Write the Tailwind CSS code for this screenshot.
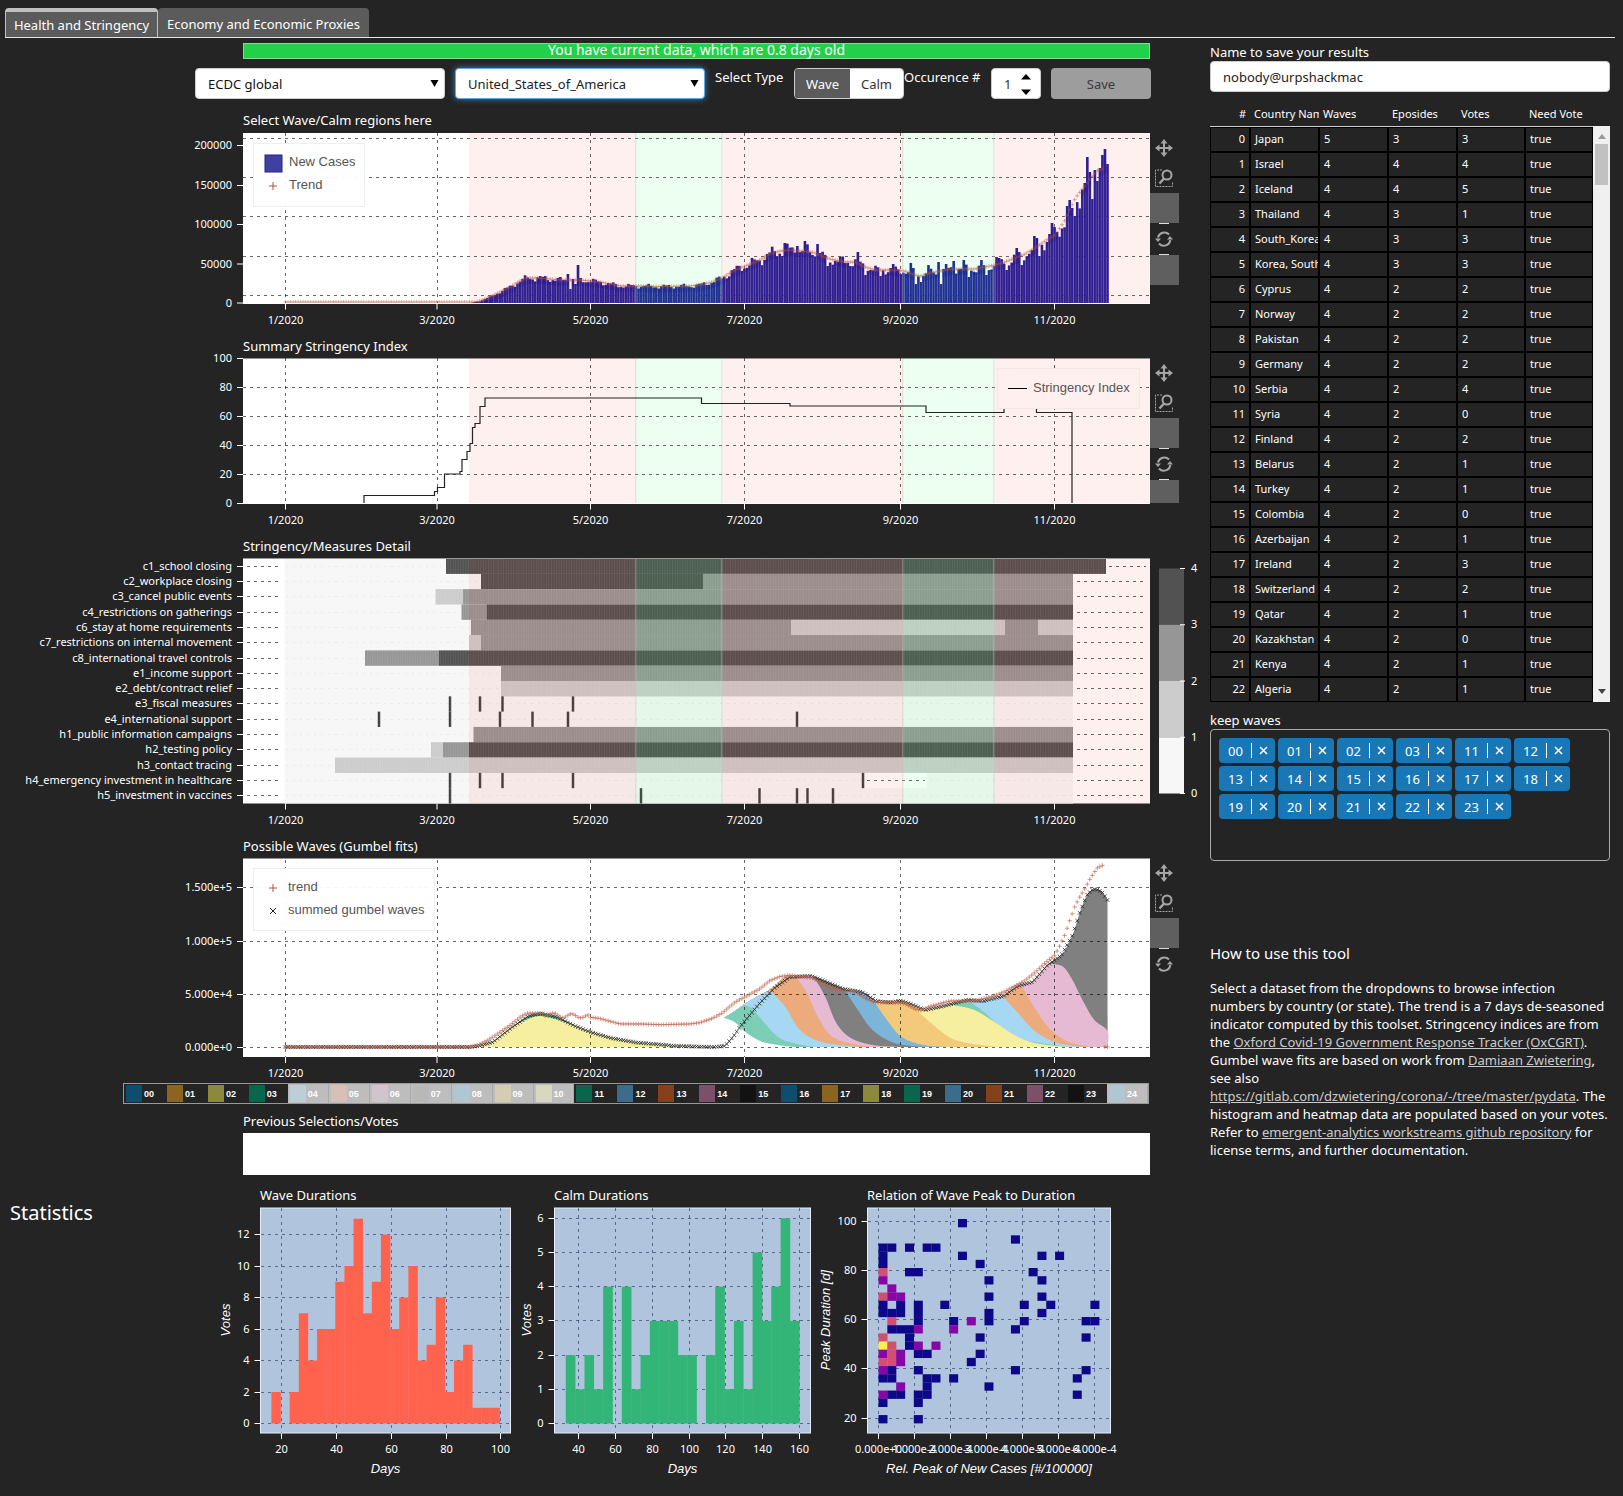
<!DOCTYPE html>
<html lang="en">
<head>
<meta charset="utf-8">
<meta name="viewport" content="width=device-width, initial-scale=1">
<title>Health and Stringency</title>
<script src="https://cdn.jsdelivr.net/npm/@tailwindcss/browser@4"></script>
</head>
<body class="bg-[#242424] text-white font-['Noto_Sans',sans-serif] text-[13px] leading-[18px] min-h-screen">
<nav class="mx-[5px] mr-2 pt-2 flex border-b border-[#e6e6e6]" aria-label="Sections">
  <button class="h-[29px] w-[153px] rounded-t border border-b-0 border-t-4 border-[#c0c0c0] bg-[#5b5b5b] text-center whitespace-nowrap leading-[22px]">Health and Stringency</button>
  <button class="h-[29px] w-[211px] rounded-t bg-[#5b5b5b] text-center whitespace-nowrap pt-[3px]">Economy and Economic Proxies</button>
</nav>

<main class="grid grid-cols-[minmax(0,1fr)_400px] gap-x-[10px] pr-[13px]">
  <div class="pt-[5px]">
    <div class="ml-[243px] mr-[50px] h-4 bg-[#23d04b] border border-[#7fdc93] text-center text-sm leading-3">You have current data, which are 0.8 days old</div>

    <form class="ml-[195px] mr-[49px] mt-[9px] flex h-[31px]" onsubmit="return false">
      <div class="relative w-[250px] mr-[10px]">
        <select aria-label="Dataset" class="appearance-none w-full h-full rounded bg-white text-[#111] border border-[#ccc] px-3 outline-none"><option>ECDC global</option></select>
        <svg class="absolute right-[6px] top-[12px] pointer-events-none" width="9" height="8"><path d="M0.500 0H8.500L4.500 7Z" fill="#000"/></svg>
      </div>
      <div class="relative w-[250px] mr-[10px]">
        <select aria-label="Country" class="appearance-none w-full h-full rounded bg-white text-[#222] border border-[#5fa8e0] px-3 outline-none shadow-[0_0_6px_#3d7fb8]"><option>United_States_of_America</option></select>
        <svg class="absolute right-[6px] top-[12px] pointer-events-none" width="9" height="8"><path d="M0.500 0H8.500L4.500 7Z" fill="#000"/></svg>
      </div>
      <span class="w-[79px]">Select Type</span>
      <div class="flex w-[110px] rounded overflow-hidden border border-[#ccc]" role="group" aria-label="Select Type">
        <button class="flex-1 bg-[#5b5b5b] text-white">Wave</button>
        <button class="w-[53px] bg-white text-[#333]">Calm</button>
      </div>
      <label for="occ" class="w-[87px] whitespace-nowrap">Occurence #</label>
      <div class="relative w-[50px] mr-[10px]">
        <input id="occ" type="number" value="1" class="[appearance:textfield] [&::-webkit-inner-spin-button]:appearance-none w-full h-full rounded bg-white text-[#333] border border-[#ccc] pl-3 pr-5 outline-none">
        <svg class="absolute right-[10px] top-[6px] pointer-events-none" width="10" height="21"><path d="M0 5.500L5 0L10 5.500ZM0 15.500H10L5 21Z" fill="#000"/></svg>
      </div>
      <button class="flex-1 rounded bg-[#9d9d9d] text-[#3a3a3a]">Save</button>
    </form>

    <section class="mt-3">
      <h2 class="ml-[243px] h-5 leading-[19px]">Select Wave/Calm regions here</h2>
      <div class="flex"><svg id="cases" class="flex-1 min-w-0 h-[206px]" role="img" aria-label="New cases"></svg><div data-tools="2" class="w-[50px] pt-[2px]"></div></div>
    </section>
    <section>
      <h2 class="ml-[243px] h-5 leading-[18px]">Summary Stringency Index</h2>
      <div class="flex h-[180px]"><svg id="index" class="flex-1 min-w-0 h-[180px] overflow-visible" role="img" aria-label="Stringency index"></svg><div data-tools="2" class="w-[50px] pt-px h-[146px] overflow-hidden"></div></div>
    </section>
    <section>
      <h2 class="ml-[243px] h-5 leading-[18px]">Stringency/Measures Detail</h2>
      <div class="flex"><svg id="heat" class="flex-1 min-w-0 h-[280px]" role="img" aria-label="Measures"></svg><svg id="scale" class="w-[50px] h-[280px]" viewBox="1150 557 50 280" role="img" aria-label="Colour scale"></svg></div>
    </section>
    <section>
      <h2 class="ml-[243px] h-5 leading-[18px]">Possible Waves (Gumbel fits)</h2>
      <div class="flex"><svg id="waves" class="flex-1 min-w-0 h-[226px]" role="img" aria-label="Possible waves"></svg><div data-tools="1" class="w-[50px] pt-px"></div></div>
      <ul id="keys" class="ml-[123px] mr-[51px] h-[21px] flex border border-[#999] font-['Liberation_Sans',sans-serif] text-[9px] font-bold"></ul>
    </section>
    <section class="mt-2">
      <h2 class="ml-[243px] h-5 leading-[18px]">Previous Selections/Votes</h2>
      <div class="ml-[243px] mr-[50px] mt-px h-[42px] bg-white"></div>
    </section>
    <section class="mt-[11px] flex">
      <h1 class="w-[210px] pl-[10px] pt-3 text-xl leading-[30px]">Statistics</h1>
      <div class="w-[303px]"><h2 class="ml-[50px] h-5 leading-[18px]">Wave Durations</h2><svg id="wd" class="w-full h-[274px]" viewBox="210 1206 303 274" role="img" aria-label="Wave durations"></svg></div>
      <div class="w-[303px]"><h2 class="ml-[41px] h-5 leading-[18px]">Calm Durations</h2><svg id="cd" class="w-full h-[274px]" viewBox="513 1206 303 274" role="img" aria-label="Calm durations"></svg></div>
      <div class="w-[303px]"><h2 class="ml-[51px] h-5 leading-[18px]">Relation of Wave Peak to Duration</h2><svg id="rel" class="w-full h-[274px]" viewBox="816 1206 303 274" role="img" aria-label="Peak against duration"></svg></div>
    </section>
  </div>

  <aside class="pt-[5px]">
    <label for="who" class="block">Name to save your results</label>
    <input id="who" type="text" value="nobody@urpshackmac" class="block w-full h-[31px] rounded bg-white text-[#222] border border-[#ccc] px-3 outline-none">
    <div class="mt-[10px] flex text-[11px]">
      <table class="w-[383px] table-fixed border-separate border-spacing-0">
        <colgroup><col class="w-[40px]"><col class="w-[69px]"><col class="w-[69px]"><col class="w-[69px]"><col class="w-[68px]"><col class="w-[68px]"></colgroup>
        <thead><tr class="h-[25px] text-left [&>th]:font-normal [&>th]:px-1 [&>th]:border-b [&>th]:border-[#ccc] [&>th]:overflow-hidden [&>th]:whitespace-nowrap"><th class="text-right">#</th><th>Country Name</th><th>Waves</th><th>Eposides</th><th>Votes</th><th>Need Vote</th></tr></thead>
        <tbody id="rows"></tbody>
      </table>
      <div class="w-[17px] mt-6 bg-[#f0f0f0] flex flex-col items-center">
        <svg class="mt-2" width="8" height="5"><path d="M0 5L4 0L8 5Z" fill="#999"/></svg>
        <div class="mt-[5px] w-[13px] h-[41px] bg-[#c1c1c1]"></div>
        <svg class="mt-auto mb-1" width="8" height="9"><path d="M0 0H8L4 5Z" fill="#444"/></svg>
      </div>
    </div>
    <h3 class="mt-[9px]">keep waves</h3>
    <ul id="chips" class="h-[132px] rounded border border-[#aaa] p-2 flex flex-wrap content-start gap-[3px]"></ul>
    <h3 class="mt-[81px] text-[15px] leading-[22px]">How to use this tool</h3>
    <p class="mt-[15px]">Select a dataset from the dropdowns to browse infection numbers by country (or state). The trend is a 7 days de-seasoned indicator computed by this toolset. Stringcency indices are from the <a href="#" class="underline text-[#ccc]">Oxford Covid-19 Government Response Tracker (OxCGRT)</a>. Gumbel wave fits are based on work from <a href="#" class="underline text-[#ccc]">Damiaan Zwietering</a>, see also <a href="#" class="underline text-[#ccc]">https://gitlab.com/dzwietering/corona/-/tree/master/pydata</a>. The histogram and heatmap data are populated based on your votes. Refer to <a href="#" class="underline text-[#ccc]">emergent-analytics workstreams github repository</a> for license terms, and further documentation.</p>
  </aside>
</main>

<script>
const $ = id => document.getElementById(id);
const L = 243, R = 1150, D0 = 285.5, DAY = 2.5213;
const RED = 'rgba(255,0,0,.06)', GREEN = 'rgba(0,255,60,.07)';
let k = 1;
const X = x => L + (x - L) * k;
const rect = (x, y, w, h, f, o = '') => `<rect x="${x}" y="${y}" width="${w}" height="${h}" fill="${f}" ${o}/>`;
const line = (x1, y1, x2, y2, s = '#fff', o = '') => `<path d="M${x1} ${y1}L${x2} ${y2}" stroke="${s}" fill="none" ${o}/>`;
const DASH = 'stroke-dasharray="3 4" stroke-opacity=".6" shape-rendering="crispEdges"';
const text = (x, y, t, o = 'text-anchor="middle"') => `<text x="${x}" y="${y + 3}" font-size="11" fill="#fff" ${o}>${t}</text>`;
const arial = (x, y, t, o = '') => `<text x="${x}" y="${y + 4}" font-size="13" font-family="Liberation Sans, sans-serif" fill="#555" ${o}>${t}</text>`;
const months = [[285.5,'1/2020'],[437,'3/2020'],[590.5,'5/2020'],[744.5,'7/2020'],[900.5,'9/2020'],[1054.5,'11/2020']];
function xAxis(y, top, grid) {
  return months.map(([x, t]) => (grid ? line(X(x), top, X(x), y, '#000', DASH) : '') + line(X(x), y, X(x), y + 6) + text(X(x), y + 17, t)).join('');
}
const yTick = (y, t) => line(237, y, 243, y) + text(232, y + .5, t, 'text-anchor="end"');
function regions(top, h) {
  return [[469,636,RED],[636,722,GREEN],[722,903,RED],[903,994,GREEN],[994,1150,RED]].map(([a, b, f]) =>
    rect(X(a), top, X(b) - X(a), h, f)).join('') + [636,722,903,994].map(x => rect(X(x) - 1, top, 1.5, h, 'rgba(190,200,190,.35)')).join('');
}
function at(pts, x) {
  for (let i = 1; i < pts.length; i++) if (x <= pts[i][0]) {
    const [a, b] = pts[i - 1], [c, d] = pts[i];
    return b + (d - b) * Math.max(0, x - a) / (c - a);
  }
  return pts[pts.length - 1][1];
}
const trend = [[285,303],[470,303],[480,301],[490,297],[500,292],[510,287],[520,281],[527,278],[540,278],[560,280],[580,280],[600,282],[620,286],[640,286],[660,286.5],[690,286],[700,285],[712,282],[722,278],[735,270],[745,266],[760,260],[770,254],[780,251],[790,250],[800,251],[812,252],[822,256],[830,259],[845,262],[855,262],[865,267],[875,270],[890,270],[905,271],[915,275],[921,276],[930,273],[940,271],[950,269],[960,269],[975,269],[985,267],[995,265],[1005,262],[1015,258],[1025,254],[1035,248],[1045,241],[1055,235],[1060,228],[1065,220],[1070,209],[1075,199],[1080,192],[1085,186],[1090,179],[1097,171],[1105,168]];
const special = {568:274,571:289,575:284,578:265,785:243,797:246,805:241,817:244,828:266,858:252,866:275,881:276,893:264,911:263,914:268,917:284,920:282,928:265,938:262,941:284,945:264,953:261,963:260,970:277,981:260,987:275,997:257,1000:258,1007:270,1016:248,1022:265,1034:236,1037:238,1039:256,1049:234,1052:223,1067:206,1070:200,1073:208,1075:216,1087:157,1090:172,1092:199,1095:170,1098:181,1101:168,1102:155,1105:149,1107:164};
const cross = (x, y, r = 2.5) => `M${x - r} ${y}h${2 * r}M${x} ${y - r}v${2 * r}`;
const ex = (x, y, r = 2) => `M${x - r} ${y - r}l${2 * r} ${2 * r}M${x + r} ${y - r}l${-2 * r} ${2 * r}`;

function drawCases() {
  let s = rect(L, 133, R2 - L, 170.5, '#fff'), bars = '', marks = '';
  s += [138.5,177.5,216.5,256.5,295.5].map(y => line(L, y, R2, y, '#000', DASH)).join('');
  s += xAxis(303.5, 133, true);
  for (let d = 70; d <= 326; d++) {
    const x = D0 + DAY * d, t = at(trend, x);
    let y = t + (303 - t) * .1 * Math.sin(d * .9 + 1) + (303 - t) * .05 * Math.sin(d * 2.3);
    for (const q in special) if (Math.abs(q - x) <= 1.26) y = special[q];
    if (y < 303) bars += rect(X(x - 1.26), y.toFixed(1), (DAY * k + .1).toFixed(2), (303.5 - y).toFixed(1), '#22209a');
  }
  for (let d = 0; d <= 324; d++) { const x = D0 + DAY * d; marks += cross(X(x), Math.min(302, at(trend, x)), 2); }
  s += bars;
  for (let d = 74; d < 326; d++) s += line(X(D0 + DAY * (d + .5)), Math.min(303, at(trend, D0 + DAY * d) + 6), X(D0 + DAY * (d + .5)), 303, '#fff', 'stroke-opacity=".12"');
  s += `<path d="${marks}" stroke="#b5523b" stroke-opacity=".55" stroke-width=".8" fill="none"/>`;
  s += regions(133, 170.5) + line(L, 303.5, R2, 303.5);
  [[303,'0'],[264,'50000'],[224.5,'100000'],[185.5,'150000'],[145.5,'200000']].forEach(([y, t]) => s += yTick(y, t));
  s += rect(253.5, 143.5, 111, 63, '#fff', 'fill-opacity=".95" stroke="#eee"') + rect(265, 155, 17, 17, '#4040a0', 'stroke="#22208a"') + arial(289, 162, 'New Cases') + `<path d="${cross(273, 186, 4)}" stroke="#b5523b"/>` + arial(289, 185, 'Trend');
  $('cases').innerHTML = s;
}
function drawIndex() {
  let s = rect(L, 358.5, R2 - L, 145, '#fff');
  s += [387.5,416.5,445.5,474.5].map(y => line(L, y, R2, y, '#000', DASH)).join('') + xAxis(503.5, 358, true) + regions(358.5, 145);
  const p = [[364,495.5],[434.5,491.5],[437.5,487.5],[444.5,474],[460,471.5],[462,459.5],[467,451.5],[470,443.5],[472.5,427.5],[475,423.5],[480,406.5],[485,398],[701.5,403.5],[790,406],[926,412.5],[1004,406],[1036.5,412.5]];
  s += `<path d="M${X(364)} 503${p.map(([x, y]) => `H${X(x)}V${y}`).join('')}H${X(1072)}V503" stroke="#222" fill="none" stroke-width="1.2"/>`;
  s += line(L, 503.5, R2, 503.5);
  [100,80,60,40,20,0].forEach((t, i) => s += yTick(358.5 + 29 * i, t));
  const o = R2 - 1150;
  s += rect(997.5 + o, 368.5, 142, 40, '#fff0f0', 'stroke="#f7e6e6"') + line(1008 + o, 388.5, 1027 + o, 388.5, '#000') + arial(1033 + o, 388, 'Stringency Index');
  $('index').innerHTML = s;
}
const E = 1073, C = ['#f7f7f7','#cccccc','#969696','#525252'];
const heat = [
  ['c1_school closing',[446,1106,3]],['c2_workplace closing',[481,703,3],[703,E,2]],['c3_cancel public events',[435.5,463,1],[463,E,2]],
  ['c4_restrictions on gatherings',[461.5,486.5,2],[486.5,E,3]],['c6_stay at home requirements',[471,791,2],[791,1005,1],[1005,1038,2],[1038,E,1]],
  ['c7_restrictions on internal movement',[469,481,1],[481,E,2]],['c8_international travel controls',[365,439,2],[439,E,3]],
  ['e1_income support',[501,E,2]],['e2_debt/contract relief',[501,E,1]],['e3_fiscal measures',450,480,502.5,573],
  ['e4_international support',379,450,500,532.5,568,797],['h1_public information campaigns',[473.5,E,2]],
  ['h2_testing policy',[431,443,1],[443,469,2],[469,E,3]],['h3_contact tracing',[335,E,1]],
  ['h4_emergency investment in healthcare',450,480,502.5,573,863],['h5_investment in vaccines',450,641,759.5,797,807.5,833]];
function drawHeat() {
  const H = 245 / 16;
  let s = rect(L, 558.5, R2 - L, 245, '#fff') + rect(X(284.5), 558.5, X(E) - X(284.5), 245, C[0]);
  heat.forEach(([name, ...cells], i) => {
    const y = 558.5 + H * i, m = Math.floor(y + H / 2) + .5;
    s += line(L + 4, m, X(282), m, '#000', DASH) + line(X(i ? 1077 : 1109), m, R2 - 4, m, '#000', DASH) + line(X(286), m, X(E), m, '#000', 'stroke-dasharray="2 5" stroke-opacity=".06"');
    if (i == 14) s += rect(X(865), y, X(927) - X(865), H, '#fff') + line(X(867), m, X(925), m, '#000', DASH);
    cells.forEach(c => s += c.length ? rect(X(c[0]), y.toFixed(2), X(c[1]) - X(c[0]), H + .1, C[c[2]]) : rect(X(c - 1.25), y, 2.5, H, '#404040'));
    s += yTick(m, name);
  });
  for (let d = 19; d < 325; d++) s += line(X(D0 + DAY * (d + .5)), 558.5, X(D0 + DAY * (d + .5)), 803, '#fff', 'stroke-opacity=".13" stroke-width=".7"');
  s += regions(558.5, 245) + xAxis(803.5, 558, false) + line(L, 558.5, R2, 558.5, '#999');
  $('heat').innerHTML = s;
  $('scale').innerHTML = ['#525252','#969696','#cccccc','#f7f7f7'].map((c, i) => rect(1159, 568.5 + 56.25 * i, 25, 56.25, c)).join('') + [4,3,2,1,0].map((t, i) => line(1180, 568.5 + 56.25 * i, 1185, 568.5 + 56.25 * i) + text(1191, 569 + 56.25 * i, t, '')).join('');
}
const sum = [[285,1047],[470,1047],[478.6,1046],[493,1042],[511,1028],[528.6,1016],[541,1013.5],[557,1017],[575,1026],[590,1032],[611,1038],[636,1042.5],[660,1044.5],[676,1046],[713,1047],[725,1046],[733,1037],[740,1027],[749,1016],[760,1003],[774.5,988],[790,977],[811,976],[822,980],[843.6,989],[862,992],[876,1001],[891,1002.5],[900,1000.5],[911,1004],[925,1010],[942,1006.5],[967,1000],[983.5,1001],[1003.5,996],[1018,986],[1032.6,982],[1047,965.5],[1061.7,955],[1072.6,935],[1080,912],[1087,895],[1092,890],[1096,889],[1102,892],[1107.5,900]];
/* [fill, right-hand decay of the wave]; later waves lie behind earlier ones */
const fits = [
  ['#808080',[[1107.5,900],[1107.6,1047]]],
  ['#e6bad2',[[1054,964],[1063.500,967],[1072.500,980],[1083.500,1002],[1094.400,1020],[1107.500,1031],[1107.600,1047]]],
  ['#ecab7c',[[1023.500,989],[1036,1010],[1051,1030],[1069,1042],[1091,1047]]],
  ['#a6d8f3',[[1003.500,997],[1018,1013],[1036,1032],[1058,1043],[1083.500,1047]]],
  ['#7dceb6',[[969,1001],[985,1013],[1003.500,1030],[1025,1040],[1054,1045],[1069,1047]]],
  ['#f6efa0',[[952.600,1005],[974.400,1010],[996,1023],[1018,1037],[1040,1044],[1069,1047]]],
  ['#f3c97c',[[914.400,1008],[931,1023],[949,1037],[967,1043],[996,1047]]],
  ['#7db5d8',[[872.600,999],[887,1020],[901.700,1037],[923.500,1045],[949,1047]]],
  ['#808080',[[845.400,991],[858,1010],[872.600,1030],[894.400,1043],[923.500,1047]]],
  ['#e6bad2',[[814.500,978],[825.400,997],[836.300,1023],[850.800,1038],[872.600,1045],[901.700,1047]]],
  ['#ecab7c',[[796.300,977],[807,993],[818,1017],[832.600,1037],[858,1045],[876,1047]]],
  ['#a6d8f3',[[771,991],[785.400,1007],[800,1030],[821.700,1042],[858,1047]]],
  ['#7dceb6',[[744.700,1005],[752.700,1009],[763.600,1022],[778,1037],[792.700,1043],[814.500,1047]]]];
function smooth(p) {
  let s = '';
  for (let i = 0; i < p.length - 1; i++) {
    const a = p[i - 1] || p[i], b = p[i], c = p[i + 1], d = p[i + 2] || c;
    s += `C${X(b[0] + (c[0] - a[0]) / 6)} ${b[1] + (c[1] - a[1]) / 6} ${X(c[0] - (d[0] - b[0]) / 6)} ${c[1] - (d[1] - b[1]) / 6} ${X(c[0])} ${c[1]}`;
  }
  return s;
}
function drawWaves() {
  let s = rect(L, 858.5, R2 - L, 198.5, '#fff');
  const top = [[724,1018],[735,1011],[744.7,1004],[760,995],[771,989],[785,977]].concat(sum.filter(q => q[0] >= 790));
  fits.forEach(([f, p]) => {
    const t = top.filter(q => q[0] < p[0][0] - 1);
    s += `<path d="M${X(724)} 1018${smooth(t.concat([p[0]]))}${smooth(p)}L${X(p[p.length - 1][0])} 1047H${X(724)}Z" fill="${f}"/>`;
  });
  s += `<path d="M${X(724)} 1018${smooth([[724,1018],[734.5,1022],[745.4,1032],[760,1041],[778,1045],[800,1047.5]])}H${X(723)}V1018Z" fill="#fff"/>`;
  const hump = sum.filter(q => q[0] > 460 && q[0] < 715);
  const fill = (p, f) => `<path d="M${X(p[0][0])} ${p[0][1]}${smooth(p)}V1047Z" fill="${f}"/>`;
  s += fill(hump, '#3fb795') + fill(hump.map(([x, y]) => [x, x > 511 && x < 575 ? y + 2.5 : y]), '#f6efa0');
  s += [887.5,941.5,994.5,1047.5].map(y => line(L, y, R2, y, '#000', DASH)).join('') + xAxis(1057, 860, true);
  let a = '', b = '';
  for (let d = 0; d <= 326; d++) {
    const x = D0 + DAY * d;
    a += cross(X(x), d > 324 ? 1047 : 1047 - (303 - at(trend, x) + (x > 545 && x < 590 ? 1.5 * Math.sin(d * .9) : 0)) * 1.355, 2.2);
    b += ex(X(x), at(sum, x), 1.8);
  }
  s += `<path d="${b}" stroke="#222" stroke-width=".8" fill="none"/><path d="${a}" stroke="#c0604a" stroke-width=".8" fill="none" stroke-opacity=".8"/>`;
  [[887.5,'1.500e+5'],[941.5,'1.000e+5'],[994.5,'5.000e+4'],[1047.5,'0.000e+0']].forEach(([y, t]) => s += yTick(y, t));
  s += rect(253.5, 868.5, 181, 62, '#fff', 'fill-opacity=".95" stroke="#eee"') + `<path d="${cross(273, 888, 4)}" stroke="#b5523b"/><path d="${ex(273, 911, 3)}" stroke="#222"/>` + arial(288, 887, 'trend') + arial(288, 910, 'summed gumbel waves');
  $('waves').innerHTML = s;
}
function statFrame(x, w, xt, yt, xl, yl, yx, bars, base) {
  let s = rect(x, 1208, w, 225, '#b0c4de', 'stroke="#e8edf5"');
  xt.forEach(([a]) => s += line(a, 1208, a, 1433, '#20305a', DASH));
  yt.forEach(([b]) => s += line(x, b, x + w, b, '#20305a', DASH));
  s += bars;
  xt.forEach(([a, t]) => s += line(a, 1433, a, 1439) + text(a, 1450, t));
  yt.forEach(([b, t]) => s += line(x - 6, b, x, b) + text(x - 11, b, t, 'text-anchor="end"'));
  s += arial(x + w / 2, 1469, xl, 'text-anchor="middle" font-style="italic" style="fill:#fff"');
  return s + `<text transform="translate(${yx} 1320) rotate(-90)" text-anchor="middle" y="4" font-size="13" font-style="italic" font-family="Liberation Sans, sans-serif" fill="#fff">${yl}</text>`;
}
function hist(vals, x, w, u, f) { return vals.map((v, i) => v ? rect(x + w * i, 1423.5 - v * u, w + .3, v * u, f) : '').join(''); }
function drawStats() {
  $('wd').innerHTML = statFrame(260.5, 250, [[281.5,20],[336.5,40],[391.5,60],[446.5,80],[500.5,100]], [0,2,4,6,8,10,12].map(v => [Math.round(1423 - 15.75 * v) + .5, v]), 'Days', 'Votes', 226,
    hist([2,0,2,7,4,6,6,9,10,13,7,9,12,6,8,10,4,5,8,2,4,5,1,1,1], 271.4, 9.13, 15.75, '#ff634d'));
  $('cd').innerHTML = statFrame(554.5, 256, [[578.5,40],[615.5,60],[652.5,80],[689.5,100],[725.5,120],[762.5,140],[799.5,160]], [0,1,2,3,4,5,6].map(v => [Math.round(1423 - 34.2 * v) + .5, v]), 'Days', 'Votes', 527,
    hist([2,1,2,1,4,0,4,1,2,3,3,3,2,2,0,2,4,1,3,1,5,3,4,6,3], 565.8, 9.34, 34.2, '#33b577'));
  /* one entry per row from the top; p, k and y mark higher counts */
  const rows = ['9','','15','0 1 3 5 6','0 9 18 20','0 11','0k 3 4 17','0p 12 18','1p','0k 1p 2p 12 18','0 2 4 7 16 19 24','0 1 2 4 12 18','1k 4 8 10p 12 16 23 24','1 2 3 4p 8p 15','0k 3 11 23','0y 1k 3 4p 6p','0p 1k 2p 4 5 11','0k 1k 2p 10','0p 1 4 15 23','0 1 5 6 8 22','2p 5 12','0p 1 2 4 5 22','0 4','','0 4'];
  const col = { p: '#8606a6', k: '#d24f71', y: '#fbf04a' };
  let b = '';
  rows.forEach((r, i) => r && r.split(' ').forEach(c => b += rect(878.5 + 8.83 * parseInt(c), 1219 + 8.17 * i, 9, 8.3, col[c.slice(-1)] || '#0d0887')));
  $('rel').innerHTML = statFrame(867.5, 243, ['0.000e+0','1.000e-4','2.000e-4','3.000e-4','4.000e-4','5.000e-4','6.000e-4'].map((t, i) => [878.5 + 36 * i, t]), [[1221.5,100],[1270.5,80],[1319.5,60],[1368.5,40],[1418.5,20]], 'Rel. Peak of New Cases [#/100000]', 'Peak Duration [d]', 826, b);
}

const names = 'Japan 5 3 3|Israel 4 4 4|Iceland 4 4 5|Thailand 4 3 1|South_Korea 4 3 3|Korea,&nbsp;South 4 3 3|Cyprus 4 2 2|Norway 4 2 2|Pakistan 4 2 2|Germany 4 2 2|Serbia 4 2 4|Syria 4 2 0|Finland 4 2 2|Belarus 4 2 1|Turkey 4 2 1|Colombia 4 2 0|Azerbaijan 4 2 1|Ireland 4 2 3|Switzerland 4 2 2|Qatar 4 2 1|Kazakhstan 4 2 0|Kenya 4 2 1|Algeria 4 2 1';
$('rows').innerHTML = names.split('|').map((r, i) => '<tr class="h-[25px]">' + [i, ...r.split(' '), 'true'].map((c, j) => `<td class="${j ? 'border border-black px-1 pt-0 pb-[2px] overflow-hidden whitespace-nowrap leading-[18px]' : 'border border-black px-1 pt-0 pb-[2px] text-right leading-[18px]'}">${c}</td>`).join('') + '</tr>').join('');
$('chips').innerHTML = '00 01 02 03 11 12 13 14 15 16 17 18 19 20 21 22 23'.split(' ').map(n => `<li class="w-[56px] h-[25px] rounded bg-[#1877b4] flex items-center pl-[9px]"><span class="w-[23px]">${n}</span><button aria-label="Remove ${n}" class="border-l border-white h-[15px] pl-[7px] flex items-center"><svg width="9" height="9"><path d="M1 1L8 8M8 1L1 8" stroke="#fff" stroke-width="1.500"/></svg></button></li>`).join('');
const dark = ['#0e4d6e','#8a6420','#8c8840','#08664c','#3c6c8c','#84421c','#7c5068','#121212'];
const off = { 4:'#bccfd8', 5:'#d8c0b6', 6:'#d2c4cc', 7:'#b8b8b8', 8:'#b0c6d2', 9:'#d6ccb4', 10:'#d8d8c0', 24:'#b0c6d2' };
$('keys').innerHTML = Array.from({ length: 25 }, (_, i) => {
  const c = off[i] || dark[i < 4 ? i : (i - 8) % 8];
  return `<li class="${off[i] ? 'flex-1 basis-0 flex items-center gap-[2px] pl-[2px] bg-[#bdbdbd] shadow-[inset_-1px_0_#aaa]' : 'flex-1 basis-0 flex items-center gap-[2px] pl-[2px]'}"><span class="w-4 h-[17px]" style="background:${c}"></span>${String(i).padStart(2, '0')}</li>`;
}).join('');

const pan = '<svg width="18" height="18" viewBox="0 0 18 18"><path d="M9 3V15M3 9H15" stroke="#a6a6a6" stroke-width="2"/><path d="M9 0L12.500 4.500H5.500ZM9 18L5.500 13.500H12.500ZM0 9L4.500 5.500V12.500ZM18 9L13.500 12.500V5.500Z" fill="#a6a6a6"/></svg>';
const zoom = '<svg width="18" height="18" viewBox="0 0 18 18" fill="none" stroke="#a6a6a6"><path d="M7 1H.5V17.500H17.500V13" stroke-dasharray="2 1"/><circle cx="12" cy="6" r="4.500" stroke-width="2"/><path d="M9 9.500L4.500 14.500" stroke-width="2.500"/></svg>';
const reset = '<svg width="18" height="18" viewBox="0 0 18 18"><path d="M3 7.500A6.500 6.500 0 0 1 14 4.500M15.300 10A6.500 6.500 0 0 1 4 13.500" stroke="#a6a6a6" stroke-width="2" fill="none"/><path d="M0 8.500H6L3 12ZM12 9.500H18L15 6Z" fill="#a6a6a6"/></svg>';
const tool = (n, g) => `<button aria-label="${n}" class="w-7 h-[30px] flex items-center justify-center">${g}</button>`;
const active = '<button aria-label="Wheel zoom" class="block w-[29px] h-[30px] bg-[#5f5f5f]"></button>', dash = '<div class="w-[10px] h-px ml-[9px] bg-[#ddd]"></div>';
document.querySelectorAll('[data-tools]').forEach(e => e.innerHTML = tool('Pan', pan) + tool('Box zoom', zoom) + active + dash + tool('Reset', reset) + (e.dataset.tools == 2 ? dash + active : ''));

let R2 = R;
function draw() {
  R2 = $('cases').getBoundingClientRect().width;
  k = (R2 - L) / (R - L);
  [['cases',131,206],['index',357,180],['heat',557,280],['waves',857,226]].forEach(([id, y, h]) => $(id).setAttribute('viewBox', `0 ${y} ${R2} ${h}`));
  drawCases(); drawIndex(); drawHeat(); drawWaves();
}
drawStats();
new ResizeObserver(draw).observe($('cases').parentElement);
addEventListener('load', draw);
</script>
</body>
</html>
